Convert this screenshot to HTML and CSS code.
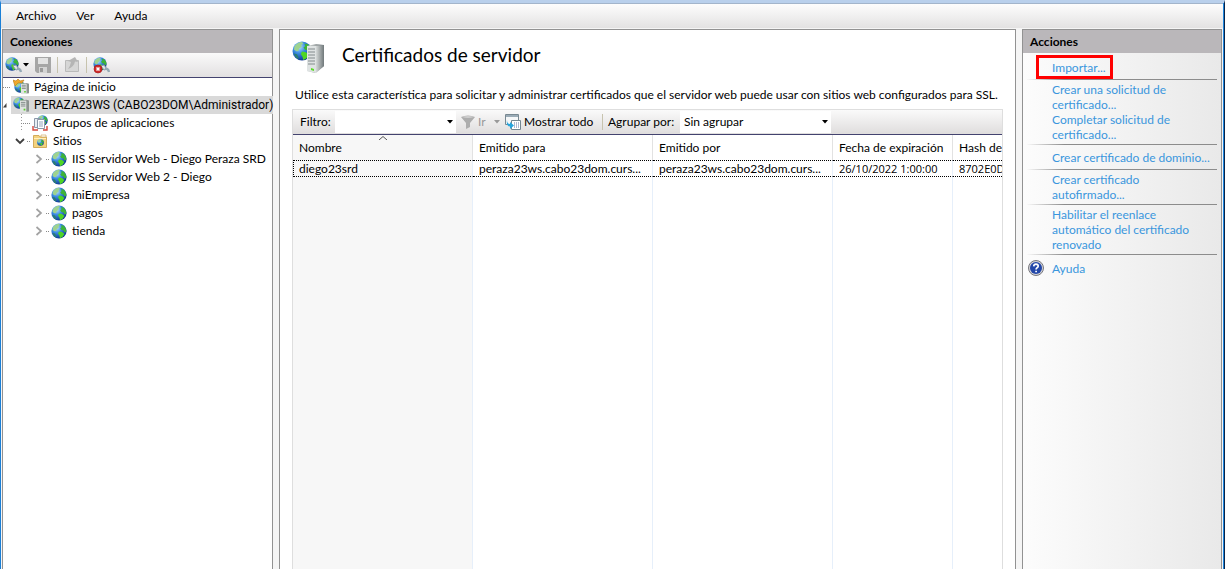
FILE: index.html
```html
<!DOCTYPE html>
<html lang="es">
<head>
<meta charset="utf-8">
<title>Certificados de servidor</title>
<link rel="stylesheet" href="styles.css">
</head>
<body>
<svg class="defs" aria-hidden="true">
  <defs>
    <radialGradient id="sea" cx="35%" cy="28%" r="75%">
      <stop offset="0" stop-color="#b9e2ff"/><stop offset=".45" stop-color="#3a8be0"/><stop offset="1" stop-color="#0d3590"/>
    </radialGradient>
    <linearGradient id="side" x1="0" y1="0" x2="1" y2="0">
      <stop offset="0" stop-color="#d6dad9"/><stop offset="1" stop-color="#70787a"/>
    </linearGradient>
    <symbol id="globe" viewBox="0 0 16 16">
      <circle cx="8" cy="8" r="7.6" fill="url(#sea)"/>
      <path d="M2 4.2Q4.4.9 8 .8L9 2 7.400 3.200 7.800 4.600 5.600 6.200 5.200 8 3.600 8.200 1.600 7Z" fill="#9ed38f"/>
      <path d="M10 2.2L12.4 2.4Q15.6 5 15.3 8.8L13.4 9.4 12.6 7.4 10.4 7 9.2 5.2 10.6 4.2Z" fill="#3db437"/>
      <path d="M8 8.4L11 9 13.4 11 11.4 14 9 15.2 8.4 12.6 7 10.4Z" fill="#4fd524"/>
      <path d="M1.4 10L4 10.6 5.4 13.6 4.6 14.4Q2.4 13 1.4 10Z" fill="#2a7f70"/>
    </symbol>
    <symbol id="tower" viewBox="0 0 10 14">
      <path d="M0 1L7 0 10 1V13L3 14 0 13Z" fill="#8c9390"/>
      <path d="M0 1H7V14H0Z" fill="#dfe3e1"/>
      <path d="M1 3H6M1 5H6M1 7H6" stroke="#7b8582"/>
      <path d="M4 10H6V12H4Z" fill="#58d12c"/>
    </symbol>
    <symbol id="server" viewBox="0 0 16 16">
      <use href="#globe" x="0" y="0" width="12" height="12"/>
      <use href="#tower" x="7" y="2" width="9" height="14"/>
    </symbol>
    <symbol id="start" viewBox="0 0 16 16">
      <use href="#globe" x="1" y="2" width="12" height="12"/>
      <use href="#tower" x="8" y="3" width="8" height="13"/>
      <path d="M0 1L3 2 5 0 7 2 11 1 9 4 5 4 2 7Z" fill="#f0a92c" stroke="#b87818" stroke-width=".6"/>
    </symbol>
    <symbol id="pools" viewBox="0 0 16 16">
      <use href="#globe" x="5" y="0" width="11" height="11"/>
      <path d="M2.500 3.500H8.500V12.500H2.500Z" fill="#e8eef4" stroke="#8b98a8"/>
      <path d="M5.500 4.500H12.500V13.500H5.500Z" fill="#fff" stroke="#8b98a8"/>
      <path d="M7 7H11M7 9H11M7 11H11" stroke="#93a4bb"/>
      <path d="M1 11V15H6M15 11V15H11" stroke="#d5473c" stroke-width="1.400" fill="none"/>
    </symbol>
    <symbol id="sites" viewBox="0 0 16 16">
      <path d="M1.500 2.500H7L8 4H14.500V14.500H1.500Z" fill="#f3d27e" stroke="#d3ac5c"/>
      <path d="M9 2H14V4H9Z" fill="#fff" stroke="#c9a04c" stroke-width=".6"/>
      <path d="M2 5.500H14" stroke="#fff1bd"/>
      <use href="#globe" x="5" y="6" width="7" height="7"/>
    </symbol>
    <symbol id="connect" viewBox="0 0 18 18">
      <use href="#globe" x="0" y="1" width="14" height="14"/>
      <path d="M8 10L11 9 14 13 11 14Z" fill="#dfe6ea" stroke="#8799a5"/>
      <path d="M12 13Q15 12 16 16" stroke="#95a9b5" stroke-width="2.400" fill="none"/>
    </symbol>
    <symbol id="disconnect" viewBox="0 0 18 18">
      <use href="#connect" width="18" height="18"/>
      <circle cx="5" cy="13" r="4" fill="#d02a2a" stroke="#9d1515" stroke-width=".6"/>
      <path d="M3.500 11.500L6.500 14.500M6.500 11.500L3.500 14.500" stroke="#fff" stroke-width="1.500"/>
    </symbol>
    <symbol id="floppy" viewBox="0 0 16 16">
      <path d="M0 0H16V16H2L0 14Z" fill="#a6a6a6"/>
      <path d="M3 1H13V7H3Z" fill="#e3e3e3"/>
      <path d="M4 10H12V16H4Z" fill="#d4d4d4"/>
      <path d="M5 11H8V15H5Z" fill="#9a9a9a"/>
    </symbol>
    <symbol id="up" viewBox="0 0 16 16">
      <path d="M1.500 3.500H14.500V14.500H1.500Z" fill="#d6d6d6" stroke="#bababa"/>
      <path d="M4 12Q6 10 7 5L4 4 11 0 14 5 11 4.500Q10 10 4 12Z" fill="#b5b5b5"/>
    </symbol>
    <symbol id="funnel" viewBox="0 0 14 14">
      <path d="M0 2Q7 -1 14 2L9 8V12L5 14V8Z" fill="#adadad"/>
      <path d="M1 2Q7 4 13 2Q7 0 1 2Z" fill="#cfcfcf"/>
    </symbol>
    <symbol id="showall" viewBox="0 0 16 16">
      <path d="M.5 .5H13.500V10.500H.5Z" fill="#f5f7f8" stroke="#788891"/>
      <path d="M1 2H13" stroke="#9aabb6" stroke-width="2"/>
      <path d="M6.500 6.500H15.500V15.500H6.500Z" fill="#fff" stroke="#738791"/>
      <path d="M9 9H10M11 9H12M13 9H14M9 11H10M11 11H12M13 11H14M9 13H10M11 13H12M13 13H14" stroke="#6076a5"/>
      <path d="M2 6Q2 10 5 10V8L9 11.500 5 15V12.500Q1 12 2 6Z" fill="#27a5dc"/>
    </symbol>
    <symbol id="down" viewBox="0 0 6 4"><path d="M0 0H6L3 3.500Z" fill="currentColor"/></symbol>
    <symbol id="chevron" viewBox="0 0 8 10"><path d="M1.500 1L6 5 1.500 9" fill="none" stroke="currentColor" stroke-width="1.700"/></symbol>
    <symbol id="chevron-down" viewBox="0 0 10 8"><path d="M1 2L5 6 9 2" fill="none" stroke="currentColor" stroke-width="1.800"/></symbol>
  </defs>
</svg>

<div class="window">
  <nav class="menu">
    <button>Archivo</button><button>Ver</button><button>Ayuda</button>
  </nav>
  <div class="panes">
    <aside class="pane">
      <h2 class="pane-title">Conexiones</h2>
      <div class="toolbar">
        <button class="tool drop" aria-label="Conectar"><svg class="i18"><use href="#connect"/></svg><svg class="caret"><use href="#down"/></svg></button>
        <button class="tool" aria-label="Guardar"><svg class="i16"><use href="#floppy"/></svg></button>
        <span class="sep"></span>
        <button class="tool" aria-label="Subir"><svg class="i16"><use href="#up"/></svg></button>
        <span class="sep"></span>
        <button class="tool" aria-label="Desconectar"><svg class="i18"><use href="#disconnect"/></svg></button>
      </div>
      <ul class="tree">
        <li class="node"><span class="lead root"><i class="dots"></i></span><span class="label"><svg class="i16"><use href="#start"/></svg>Página de inicio</span></li>
        <li class="node"><span class="lead root"><svg class="corner" viewBox="0 0 4 5"><path d="M3.500 0V4.500H0Z" fill="#404040"/></svg></span><span class="label selected"><svg class="i16"><use href="#server"/></svg>PERAZA23WS (CABO23DOM\Administrador)</span></li>
        <li class="node"><span class="lead child branch"><i class="dots"></i></span><span class="label"><svg class="i16"><use href="#pools"/></svg>Grupos de aplicaciones</span></li>
        <li class="node"><span class="lead child"><button class="expand open" aria-label="Contraer Sitios"><svg class="chev-down"><use href="#chevron-down"/></svg></button><i class="dots short"></i></span><span class="label"><svg class="i16"><use href="#sites"/></svg>Sitios</span></li>
        <li class="node"><span class="lead leaf"><button class="expand" aria-label="Expandir"><svg class="chev"><use href="#chevron"/></svg></button><i class="dots short"></i></span><span class="label"><svg class="i16"><use href="#globe"/></svg>IIS Servidor Web - Diego Peraza SRD</span></li>
        <li class="node"><span class="lead leaf"><button class="expand" aria-label="Expandir"><svg class="chev"><use href="#chevron"/></svg></button><i class="dots short"></i></span><span class="label"><svg class="i16"><use href="#globe"/></svg>IIS Servidor Web 2 - Diego</span></li>
        <li class="node"><span class="lead leaf"><button class="expand" aria-label="Expandir"><svg class="chev"><use href="#chevron"/></svg></button><i class="dots short"></i></span><span class="label"><svg class="i16"><use href="#globe"/></svg>miEmpresa</span></li>
        <li class="node"><span class="lead leaf"><button class="expand" aria-label="Expandir"><svg class="chev"><use href="#chevron"/></svg></button><i class="dots short"></i></span><span class="label"><svg class="i16"><use href="#globe"/></svg>pagos</span></li>
        <li class="node"><span class="lead leaf"><button class="expand" aria-label="Expandir"><svg class="chev"><use href="#chevron"/></svg></button><i class="dots short"></i></span><span class="label"><svg class="i16"><use href="#globe"/></svg>tienda</span></li>
      </ul>
    </aside>

    <main class="pane feature">
      <header class="feature-head">
        <svg class="feature-icon" viewBox="0 0 34 34">
          <use href="#globe" x="0" y="0" width="20" height="20"/>
          <path d="M15 5L24 3 32 4V25L23 32 15 30Z" fill="url(#side)"/>
          <path d="M15 5H24V32L15 30Z" fill="#dfe3e3"/>
          <path d="M16 8H23M16 11H23M16 14H23M16 17H23M16 20H23M16 23H23" stroke="#838b8d"/>
          <path d="M19 27L22 28V30L19 29Z" fill="#5bdc27"/>
          <path d="M24 5L32 4V25L24 32Z" fill="url(#side)"/>
        </svg>
        <h1>Certificados de servidor</h1>
      </header>
      <p class="intro">Utilice esta característica para solicitar y administrar certificados que el servidor web puede usar con sitios web configurados para SSL.</p>
      <section class="list">
        <div class="filterbar">
          <label for="filter" class="filter-label">Filtro:</label>
          <span class="combo"><input id="filter" type="text"><svg class="caret"><use href="#down"/></svg></span>
          <button class="tool go" disabled><svg class="i14"><use href="#funnel"/></svg>Ir<svg class="caret go-caret"><use href="#down"/></svg></button>
          <button class="tool show"><svg class="i16"><use href="#showall"/></svg>Mostrar todo</button>
          <span class="sep bar-sep"></span>
          <label for="group" class="group-label">Agrupar por:</label>
          <span class="combo group"><select id="group"><option>Sin agrupar</option></select><svg class="caret"><use href="#down"/></svg></span>
        </div>
        <div class="scroll">
          <table>
            <colgroup><col class="c-wide sorted"><col class="c-wide"><col class="c-wide"><col class="c-date"><col class="c-hash"></colgroup>
            <thead><tr>
              <th class="sort-col">Nombre<svg class="sort" viewBox="0 0 8 4"><path d="M0 4L4 .5 8 4" fill="none" stroke="#555"/></svg></th>
              <th>Emitido para</th><th>Emitido por</th><th>Fecha de expiración</th><th>Hash de</th>
            </tr></thead>
            <tbody>
              <tr class="row"><td>diego23srd</td><td>peraza23ws.cabo23dom.curs...</td><td>peraza23ws.cabo23dom.curs...</td><td class="figures">26/10/2022 1:00:00</td><td class="figures">8702E0D</td></tr>
              <tr class="fill"><td></td><td></td><td></td><td></td><td></td></tr>
            </tbody>
          </table>
        </div>
      </section>
    </main>

    <aside class="pane actions">
      <h2 class="pane-title">Acciones</h2>
      <ul class="action-list">
        <li class="group-first"><a class="marked" href="#importar">Importar...</a></li>
        <li><a href="#solicitud">Crear una solicitud de certificado...</a><a href="#completar">Completar solicitud de certificado...</a></li>
        <li class="single"><a href="#dominio">Crear certificado de dominio...</a></li>
        <li><a href="#autofirmado">Crear certificado autofirmado...</a></li>
        <li><a href="#reenlace">Habilitar el reenlace automático del certificado renovado</a></li>
        <li class="help"><svg class="i16" viewBox="0 0 16 16"><circle cx="8" cy="8" r="7.500" fill="#d4d4d8" stroke="#77777d"/><circle cx="8" cy="8" r="6" fill="#2347a8"/><path d="M5.700 6.400Q5.900 4.200 8 4.200 10.300 4.300 10.200 6.200 10 7.400 8.800 8 8.100 8.400 8.100 9.500M8.100 10.800V12.300" fill="none" stroke="#fff" stroke-width="1.700"/></svg><a href="#ayuda">Ayuda</a></li>
      </ul>
    </aside>
  </div>
</div>
</body>
</html>
```
FILE: styles.css
```css
* { box-sizing: border-box; }
html, body { height: 100%; }
body {
  margin: 0;
  background: #f5f5f5;
  color: #000;
  font: 12px/18px Lato, "Open Sans", sans-serif;
  overflow: hidden;
}
button, input, select { font: inherit; color: inherit; border: 0; padding: 0; margin: 0; background: none; }
ul { list-style: none; margin: 0; padding: 0; }
h1, h2, p { margin: 0; font-weight: 400; }
svg { flex: none; display: block; }
.defs { position: absolute; width: 0; height: 0; }
.i14 { width: 14px; height: 14px; }
.i16 { width: 16px; height: 16px; }
.i18 { width: 18px; height: 18px; }
.caret { width: 6px; height: 4px; }

.window {
  height: 100%;
  display: flex;
  flex-direction: column;
  border-left: 1px solid #1a7fd6;
  border-right: 1px solid #06244a;
  border-top: 3px solid #b9d0ec;
  box-shadow: inset -1px 0 #2186dc;
}
.menu {
  height: 25px;
  flex: none;
  display: flex;
  gap: 20px;
  padding-left: 15px;
  margin-right: 1px;
  border-top: 1px solid #a3b5cb;
  background: linear-gradient(#fdfdfd, #e3e2e2);
}
.panes {
  flex: 1;
  min-height: 0;
  display: grid;
  grid-template-columns: 271px 1fr 200px;
  gap: 6px;
  padding: 1px 2px 0 1px;
}
.pane {
  min-width: 0;
  display: flex;
  flex-direction: column;
  border: 1px solid #929292;
  border-bottom: 0;
  background: #fff;
}
.pane-title {
  flex: none;
  height: 23px;
  padding-left: 7px;
  background: #bab7ba;
  font-size: 12px;
  line-height: 23px;
  font-weight: 700;
}
.toolbar {
  flex: none;
  height: 25px;
  display: flex;
  align-items: center;
  gap: 6px;
  padding-left: 2px;
  border-bottom: 1px solid #43436f;
  background: linear-gradient(#fafafa, #e2e0e1);
}
.tool { display: flex; align-items: center; }
.sep { width: 1px; height: 16px; background: #c7c3ae; }

.node { display: flex; height: 18px; }
.lead { flex: none; display: flex; align-items: center; justify-content: flex-end; }
.root { width: 8px; justify-content: flex-start; }
.child { width: 27px; }
.leaf { width: 46px; }
.branch { background: repeating-linear-gradient(#999 0 1px, transparent 1px 3px) 18px 0 / 1px 100% no-repeat; }
.dots { width: 9px; height: 1px; background: repeating-linear-gradient(90deg, #888 0 1px, transparent 1px 2px); }
.short { width: 3px; }
.expand { margin-right: 3px; color: #a2a2a2; }
.open { margin-right: 2px; color: #404040; }
.corner { width: 4px; height: 5px; }
.chev { width: 8px; height: 10px; }
.chev-down { width: 10px; height: 8px; }
.label { flex: 1; display: flex; align-items: center; gap: 5px; padding-left: 2px; white-space: nowrap; }
.selected { background: #d9d9d9; font-family: Roboto, "Open Sans", sans-serif; }

.feature { padding: 11px 12px 0; }
.feature-head { display: flex; align-items: flex-start; gap: 16px; height: 34px; }
.feature-icon { width: 34px; height: 34px; }
.feature-head h1 { font-size: 19px; line-height: 27px; }
.intro { padding: 11px 0 5px 3px; white-space: nowrap; }
.list {
  flex: 1;
  min-height: 0;
  display: flex;
  flex-direction: column;
  border: 1px solid #dedede;
  border-bottom: 0;
}
.filterbar {
  flex: none;
  height: 25px;
  display: flex;
  align-items: center;
  border-bottom: 1px solid #43436f;
  background: linear-gradient(#fafafa, #dfdddd);
  white-space: nowrap;
}
.filter-label { width: 42px; padding-left: 7px; }
.combo { display: flex; align-items: center; width: 121px; height: 22px; padding-right: 3px; background: #fff; }
.combo input, .combo select { flex: 1; min-width: 0; height: 22px; appearance: none; outline: 0; }
.go { width: 39px; margin-left: 5px; gap: 3px; color: #999; }
.go-caret { margin-left: auto; }
.show { width: 88px; gap: 3px; margin-left: 5px; }
.bar-sep { margin: 0 5px 0 9px; }
.group-label { width: 72px; }
.group { width: 151px; padding-left: 4px; }

.scroll { flex: 1; min-height: 0; overflow: hidden; }
table { width: 100%; height: 100%; table-layout: fixed; border-collapse: separate; border-spacing: 0; }
.c-wide { width: 180px; }
.c-date { width: 120px; }
.sorted { background: #f7f7f7; }
th, td { padding: 0 0 0 6px; border-right: 1px solid #e6effa; text-align: left; font-weight: 400; white-space: nowrap; overflow: hidden; }
th { position: relative; height: 25px; border-color: #e2e2e2; background: #fff; }
th:last-child, td:last-child { border-right: 0; }
.sort-col { background: #f7f7f7; }
.sort { position: absolute; top: 1px; left: 50%; width: 8px; height: 4px; margin-left: -4px; }
.row td { height: 17px; line-height: 15px; border-top: 1px dotted #000; border-bottom: 1px dotted #000; }
.row td:first-child { padding-left: 5px; border-left: 1px dotted #000; }
.row .figures { font-family: "Open Sans", sans-serif; font-size: 11px; }

.actions { background: linear-gradient(90deg, #fcfcfc, #e9e9e9); }
.action-list { padding: 2px 4px 0; }
.action-list li {
  padding: 2px 16px 2px 25px;
  line-height: 15px;
  border-bottom: 1px solid;
  border-image: linear-gradient(90deg, transparent, #8c8c8c 20%) 1;
}
.action-list a { display: block; color: #3a96dd; text-decoration: none; }
.action-list .group-first { padding: 0; }
.action-list .marked {
  width: 77px;
  margin-left: 9px;
  padding: 2px 0 1px 13px;
  border: 3px solid #f00;
}
.action-list .single { padding: 5px 0 4px 25px; white-space: nowrap; }
.action-list .help { display: flex; align-items: center; gap: 8px; padding: 5px 0 0 1px; border: 0; }
```
